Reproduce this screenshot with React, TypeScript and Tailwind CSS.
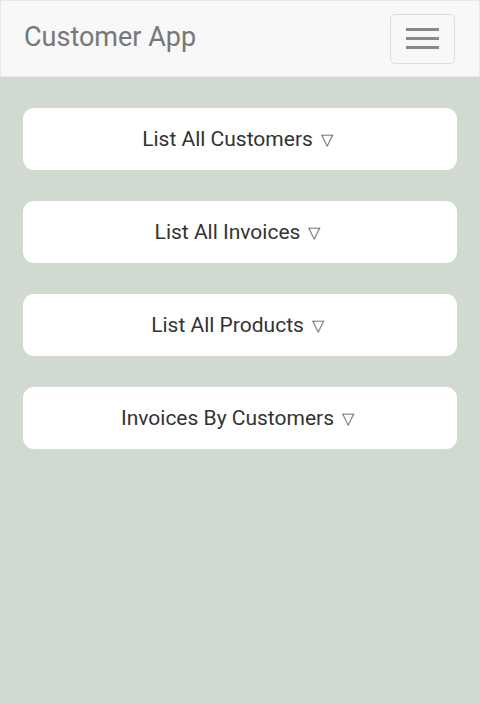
export default function App() {
  const items = ["List All Customers", "List All Invoices", "List All Products", "Invoices By Customers"];
  return (
    <div className="w-[480px] h-[704px] bg-[#d0dad1] flex flex-col" style={{ fontFamily: "Roboto, 'Liberation Sans', sans-serif" }}>
      <div className="h-[77px] bg-[#f8f8f8] border border-[#e7e7e7] flex items-center justify-between pl-[23px] pr-[24px]">
        <span className="text-[27px] text-[#777777] leading-none -mt-[2px]">Customer App</span>
        <button className="w-[65px] h-[50px] border border-[#dddddd] rounded-[5px] flex flex-col items-center justify-center gap-[6px]">
          <span className="block w-[33px] h-[3px] bg-[#888888]"></span>
          <span className="block w-[33px] h-[3px] bg-[#888888]"></span>
          <span className="block w-[33px] h-[3px] bg-[#888888]"></span>
        </button>
      </div>
      <div className="flex flex-col gap-[31px] px-[23px] pt-[31px]">
        {items.map((t) => (
          <div key={t} className="h-[62px] bg-white rounded-[11px] flex items-center justify-center text-[21px] text-[#333333] pt-[2px] pr-[5px]">
            <span>{t}</span>
            <span className="ml-[8px] text-[16px] text-[#555555]">▽</span>
          </div>
        ))}
      </div>
    </div>
  );
}
